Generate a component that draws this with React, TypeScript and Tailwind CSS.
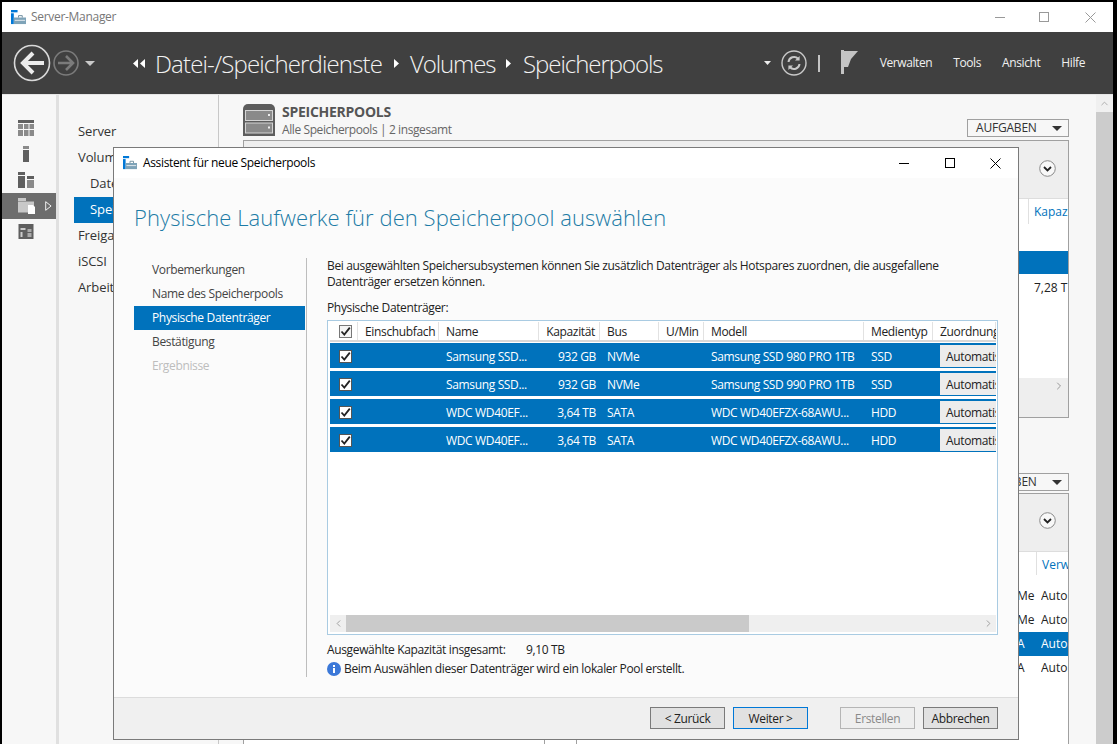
import { ChevronLeft, ChevronRight, ChevronUp } from "lucide-react";

const SANS = "font-['Open_Sans','Liberation_Sans',sans-serif]";

function AppIcon({ className }: { className?: string }) {
  return (
    <svg viewBox="0 0 16 16" className={className}>
      <rect x="0" y="0" width="7" height="2.5" fill="#0078d7" />
      <rect x="0" y="3.5" width="3" height="11.5" fill="#0078d7" />
      <path d="M3 8h13v7H3z" fill="#7ea3b8" />
      <path d="M8 8V6h4v2" fill="none" stroke="#6b8a9c" strokeWidth="1" />
      <rect x="4" y="10.5" width="11" height="1" fill="#e8eef2" />
    </svg>
  );
}

function Triangle({ dir = "right", color = "#fff" }: { dir?: "right" | "left" | "down"; color?: string }) {
  const pts = dir === "right" ? "0,0 5,4.5 0,9" : dir === "left" ? "5,0 0,4.5 5,9" : "0,0 10,0 5,5";
  const w = dir === "down" ? 10 : 5;
  const h = dir === "down" ? 5 : 9;
  return (
    <svg width={w} height={h} viewBox={`0 0 ${w} ${h}`} className="shrink-0">
      <polygon points={pts} fill={color} />
    </svg>
  );
}

function NavButtons() {
  return (
    <div className="flex items-center">
      <svg width="38" height="38" viewBox="0 0 38 38" className="ml-[11px]">
        <circle cx="19" cy="19" r="17.5" fill="none" stroke="#d8d8d8" strokeWidth="1.6" />
        <path d="M20 9L10 19l10 10M10.5 19H31" fill="none" stroke="#ececec" strokeWidth="4" />
      </svg>
      <svg width="26" height="26" viewBox="0 0 26 26" className="ml-[2px]">
        <circle cx="13" cy="13" r="12" fill="none" stroke="#7b7b7b" strokeWidth="1.6" />
        <path d="M13 6l7 7-7 7M20 13H5" fill="none" stroke="#7b7b7b" strokeWidth="2.6" />
      </svg>
      <div className="ml-[6px]">
        <Triangle dir="down" color="#c9c9c9" />
      </div>
    </div>
  );
}

function TopBar() {
  return (
    <div className="flex h-[62px] items-center bg-[#404040] text-white">
      <NavButtons />
      <div className="ml-[38px] flex items-center gap-[2px]">
        <Triangle dir="left" />
        <Triangle dir="left" />
      </div>
      <span className="ml-[10px] mt-[2px] w-[239px] text-[24px] font-light tracking-[-0.85px] text-[#f2f2f2]">Datei-/Speicherdienste</span>
      <Triangle />
      <span className="ml-[11px] mt-[2px] w-[96px] text-[24px] font-light tracking-[-1.1px] text-[#f2f2f2]">Volumes</span>
      <Triangle />
      <span className="ml-[12px] mt-[2px] text-[24px] font-light tracking-[-1.05px] text-[#f2f2f2]">Speicherpools</span>
      <div className="ml-auto flex items-center">
        <svg width="7" height="4" viewBox="0 0 7 4" className="shrink-0">
          <polygon points="0,0 7,0 3.5,4" fill="#eee" />
        </svg>
        <svg width="26" height="26" viewBox="0 0 26 26" className="ml-[10px]">
          <circle cx="13" cy="13" r="12" fill="none" stroke="#c8c8c8" strokeWidth="1.4" />
          <path d="M7.5 12a5.6 5.6 0 0 1 9.6-3.3M18.5 14a5.6 5.6 0 0 1-9.6 3.3" fill="none" stroke="#c8c8c8" strokeWidth="2" />
          <path d="M18.6 6v4.6H14M7.4 20v-4.6H12" fill="#c8c8c8" />
        </svg>
        <div className="ml-[11px] h-[17px] w-[2px] bg-[#c4c4c4]" />
        <svg width="18" height="24" viewBox="0 0 18 24" className="mb-[3px] ml-[21px]">
          <rect x="0" y="0" width="3" height="24" fill="#c4c4c4" />
          <path d="M3 1h14l-7 8-3 8H3z" fill="#c4c4c4" />
        </svg>
        <div className="ml-[21px] flex gap-[21px] pr-[28px] text-[12px] font-medium tracking-[-0.4px] text-[#f0f0f0]">
          <span>Verwalten</span>
          <span>Tools</span>
          <span>Ansicht</span>
          <span>Hilfe</span>
        </div>
      </div>
    </div>
  );
}

function RailIcon({ i }: { i: number }) {
  const a = "#5f5f5f";
  const b = "#8a8a8a";
  if (i === 0)
    return (
      <svg width="16" height="16" viewBox="0 0 16 16">
        <rect width="16" height="3" fill={a} />
        <rect y="4" width="5" height="5" fill={b} />
        <rect x="6" y="4" width="4.5" height="5" fill={b} />
        <rect x="11.5" y="4" width="4.5" height="5" fill={b} />
        <rect y="10" width="5" height="6" fill={b} />
        <rect x="6" y="10" width="4.5" height="6" fill={b} />
        <rect x="11.5" y="10" width="4.5" height="6" fill={b} />
      </svg>
    );
  if (i === 1)
    return (
      <svg width="16" height="16" viewBox="0 0 16 16">
        <rect x="5" width="6" height="3" fill={b} />
        <rect x="5" y="4" width="6" height="12" fill={a} />
      </svg>
    );
  if (i === 2)
    return (
      <svg width="16" height="16" viewBox="0 0 16 16">
        <rect width="7" height="3" fill={a} />
        <rect y="4" width="7" height="12" fill={a} />
        <rect x="9" y="4" width="7" height="3" fill={a} />
        <rect x="9" y="8" width="7" height="8" fill={b} />
      </svg>
    );
  if (i === 3)
    return (
      <svg width="18" height="16" viewBox="0 0 18 16">
        <rect width="8" height="3" fill="#c8c8c8" />
        <rect y="3.5" width="16" height="11" fill="#c8c8c8" />
        <path d="M10 7h5l2 2v7h-7z" fill="#fff" />
      </svg>
    );
  return (
    <svg width="16" height="16" viewBox="0 0 16 16">
      <rect x="0.5" width="15" height="15" fill={a} />
      <rect x="2.5" y="4" width="5" height="2" fill="#ccc" />
      <rect x="2.5" y="8" width="2" height="5" fill="#ccc" />
      <rect x="9.5" y="5" width="4" height="3" fill="#aaa" />
      <rect x="9.5" y="9" width="4" height="4" fill="#aaa" />
    </svg>
  );
}

function Rail() {
  return (
    <div className="w-[54px] shrink-0 border-r-[3px] border-[#e0e0e0] box-content pt-[20px]">
      {[0, 1, 2, 3, 4].map((i) => (
        <div key={i} className={`flex h-[26px] items-center pl-[16px] ${i === 3 ? "bg-[#6d6d6d]" : ""}`}>
          <RailIcon i={i} />
          {i === 3 && (
            <svg width="7" height="10" viewBox="0 0 7 10" className="ml-[9px]">
              <path d="M.7.7l5.4 4.3-5.4 4.3z" fill="none" stroke="#f0f0f0" />
            </svg>
          )}
        </div>
      ))}
    </div>
  );
}

function SideNav() {
  const items = [
    { t: "Server" },
    { t: "Volumes" },
    { t: "Datenträger", sub: true },
    { t: "Speicherpools", sub: true, active: true },
    { t: "Freigaben" },
    { t: "iSCSI" },
    { t: "Arbeitsordner" },
  ];
  return (
    <div className="w-[160px] shrink-0 border-r border-[#c8c8c8] pt-[24px] pl-[15px] text-[13px] tracking-[-0.1px] text-[#333]">
      {items.map((it) => (
        <div
          key={it.t}
          className={`flex h-[26px] items-center ${it.sub ? "pl-[16px]" : "pl-[4px]"} ${it.active ? "bg-[#0072bc] text-white" : ""}`}
        >
          {it.t}
        </div>
      ))}
    </div>
  );
}

function TasksButton({ label = "AUFGABEN" }: { label?: string }) {
  return (
    <div className="flex h-[18px] w-[102px] items-center justify-between border border-[#a0a0a0] pl-[8px] pr-[6px] text-[12px] tracking-[-0.2px] text-[#333]">
      <span>{label}</span>
      <Triangle dir="down" color="#333" />
    </div>
  );
}

function CircleChevron() {
  return (
    <svg width="17" height="17" viewBox="0 0 17 17">
      <circle cx="8.5" cy="8.5" r="7.8" fill="#f8f8f8" stroke="#8a8a8a" />
      <path d="M5 7l3.5 3.5L12 7" fill="none" stroke="#222" strokeWidth="1.8" />
    </svg>
  );
}

function PoolsIcon() {
  return (
    <svg width="32" height="32" viewBox="0 0 32 32">
      <path d="M0 5a5 5 0 0 1 5-5h22a5 5 0 0 1 5 5v27H0z" fill="#5d5d5d" />
      <rect x="2.5" y="6.5" width="27" height="10" fill="#8a8a8a" stroke="#d4d4d4" />
      <rect x="2.5" y="19" width="27" height="10" fill="#8a8a8a" stroke="#d4d4d4" />
      <rect x="25" y="10" width="2" height="2" fill="#eee" />
      <rect x="25" y="22.5" width="2" height="2" fill="#eee" />
    </svg>
  );
}

function BackgroundContent() {
  return (
    <div className="flex-1 bg-[#f7f7f7] pl-[24px] pr-[27px] text-[12px] text-[#222]">
      <div className="flex h-[45px] items-start pt-[9px]">
        <PoolsIcon />
        <div className="ml-[7px] -mt-[1px]">
          <div className="text-[14px] font-bold leading-[18px] tracking-[-0.27px] text-[#555]">SPEICHERPOOLS</div>
          <div className="text-[12px] leading-[18px] tracking-[-0.4px] text-[#666]">Alle Speicherpools | 2 insgesamt</div>
        </div>
        <div className="ml-auto mt-[15px]">
          <TasksButton />
        </div>
      </div>
      <div className="h-[278px] border border-[#a0a0a0] bg-white">
        <div className="flex h-[57px] items-center justify-end bg-[#eeeeee] pb-[2px] pr-[12px]">
          <CircleChevron />
        </div>
        <div className="flex h-[26px] justify-end border-t border-[#ddd]">
          <div className="w-[40px] border-l border-[#e0e0e0] pl-[5px] pt-[4px] whitespace-nowrap overflow-hidden text-[#0072bc]">Kapazität</div>
        </div>
        <div className="mt-[27px] h-[23px] bg-[#0072bc]" />
        <div className="mt-[2px] flex h-[22px] justify-end">
          <div className="w-[34px] overflow-hidden whitespace-nowrap pt-[3px]">7,28 TB</div>
        </div>
        <div className="mt-[80px] flex h-[39px] justify-end bg-[#eeeeee] pr-[3px] pt-[2px]">
          <ChevronRight size={12} color="#999" />
        </div>
      </div>
      <div className="mt-[55px] flex justify-end">
        <TasksButton label="AUFGABEN" />
      </div>
      <div className="mt-[2px] h-[252px] border border-b-0 border-[#a0a0a0] bg-white">
        <div className="flex h-[57px] items-center justify-end bg-[#eeeeee] pb-[4px] pr-[12px]">
          <CircleChevron />
        </div>
        <div className="flex h-[24px] justify-end border-t border-[#ddd]">
          <div className="w-[32px] border-l border-[#e0e0e0] pl-[5px] pt-[4px] whitespace-nowrap overflow-hidden text-[#0072bc]">Verwaltung</div>
        </div>
        <div className="mt-[9px]">
          {["Me", "Me", "A", "A"].map((v, i) => (
            <div key={i} className={`flex h-[24px] items-center justify-end whitespace-nowrap ${i === 2 ? "bg-[#0072bc] text-white" : ""}`}>
              <span className="w-[24px]">{v}</span>
              <span className="w-[27px] overflow-hidden">Automatisch</span>
            </div>
          ))}
        </div>
        <div className="mt-[58px] flex h-[12px] pl-[300px]">
          <div className="h-full w-[33px] border-x border-[#a0a0a0]" />
        </div>
      </div>
    </div>
  );
}

function Check({ dark = false }: { dark?: boolean }) {
  return (
    <div className={`flex h-[13px] w-[13px] items-center justify-center border ${dark ? "border-[#555] bg-white" : "border-[#777] bg-[#f4f4f4]"}`}>
      <svg width="11" height="11" viewBox="0 0 11 11">
        <path d="M1.5 5.5l2.8 3L9.8 1.6" fill="none" stroke="#222" strokeWidth="1.8" />
      </svg>
    </div>
  );
}

const COLS = [
  { w: "w-[28px]", label: "" },
  { w: "w-[81px]", label: "Einschubfach" },
  { w: "w-[100px]", label: "Name" },
  { w: "w-[61px]", label: "Kapazität", right: true },
  { w: "w-[59px]", label: "Bus" },
  { w: "w-[45px]", label: "U/Min" },
  { w: "w-[160px]", label: "Modell" },
  { w: "w-[69px]", label: "Medientyp" },
  { w: "w-[63px]", label: "Zuordnung" },
];

const DISKS = [
  { name: "Samsung SSD...", cap: "932 GB", bus: "NVMe", model: "Samsung SSD 980 PRO 1TB", type: "SSD" },
  { name: "Samsung SSD...", cap: "932 GB", bus: "NVMe", model: "Samsung SSD 990 PRO 1TB", type: "SSD" },
  { name: "WDC WD40EF...", cap: "3,64 TB", bus: "SATA", model: "WDC WD40EFZX-68AWU...", type: "HDD" },
  { name: "WDC WD40EF...", cap: "3,64 TB", bus: "SATA", model: "WDC WD40EFZX-68AWU...", type: "HDD" },
];

function DiskTable() {
  return (
    <div className="mt-[4px] flex h-[315px] w-[671px] flex-col border border-[#a9cbe2] bg-white pl-[2px] pr-[1px] pt-[1px]">
      <div className="flex h-[20px] overflow-hidden border-b-2 border-[#d8d8d8]">
        {COLS.map((c, i) => (
          <div
            key={i}
            className={`flex shrink-0 items-center whitespace-nowrap border-r border-[#e2e2e2] pt-[2px] ${c.w} ${c.right ? "justify-end pr-[4px]" : "pl-[7px]"}`}
          >
            {i === 0 ? (
              <div className="ml-[2px] mb-[2px]">
                <Check />
              </div>
            ) : (
              c.label
            )}
          </div>
        ))}
      </div>
      <div className="flex flex-1 flex-col gap-[3px] pt-[1px]">
        {DISKS.map((d, i) => (
          <div key={i} className="flex h-[25px] items-center overflow-hidden bg-[#0072bc] pt-[2px] text-white">
            <div className="w-[28px] shrink-0 pl-[9px]">
              <Check dark />
            </div>
            <div className="w-[81px] shrink-0" />
            <div className="w-[100px] shrink-0 pl-[7px]">{d.name}</div>
            <div className="w-[61px] shrink-0 pr-[4px] text-right">{d.cap}</div>
            <div className="w-[59px] shrink-0 pl-[7px]">{d.bus}</div>
            <div className="w-[45px] shrink-0" />
            <div className="w-[160px] shrink-0 pl-[7px]">{d.model}</div>
            <div className="w-[69px] shrink-0 pl-[7px]">{d.type}</div>
            <div className="mb-[2px] ml-[7px] flex h-[22px] flex-1 items-center overflow-hidden whitespace-nowrap bg-[#ececec] pl-[6px] pt-[2px] text-[#222]">
              Automatisch
            </div>
          </div>
        ))}
      </div>
      <div className="mb-[2px] flex h-[17px] items-center bg-[#efefef]">
        <div className="flex w-[16px] justify-center">
          <ChevronLeft size={11} color="#999" />
        </div>
        <div className="h-full w-[403px] bg-[#cacaca]" />
        <div className="ml-auto flex w-[16px] justify-center">
          <ChevronRight size={11} color="#999" />
        </div>
      </div>
    </div>
  );
}

function WizButton({ label, focus, off }: { label: string; focus?: boolean; off?: boolean }) {
  const tone = focus ? "border-[#0078d7] bg-[#e1e1e1] text-[#222]" : off ? "border-[#b5b5b5] bg-[#eeeeee] text-[#8a8a8a]" : "border-[#7a7a7a] bg-[#e1e1e1] text-[#222]";
  return <div className={`flex h-[22px] w-[75px] items-center justify-center border pt-[2px] ${tone}`}>{label}</div>;
}

function Wizard() {
  const steps = ["Vorbemerkungen", "Name des Speicherpools", "Physische Datenträger", "Bestätigung", "Ergebnisse"];
  return (
    <div className="absolute left-[113px] top-[147px] flex h-[593px] w-[906px] flex-col border border-[#7a7a7a] bg-[#fbfbfb] text-[12px] tracking-[-0.35px] text-[#222]">
      <div className="flex h-[30px] items-center bg-white pl-[9px]">
        <AppIcon className="h-[14px] w-[14px]" />
        <span className="ml-[6px] text-black">Assistent für neue Speicherpools</span>
        <div className="ml-auto flex items-center">
          <div className="h-px w-[10px] bg-black" />
          <div className="ml-[36px] h-[10px] w-[10px] border border-black" />
          <svg width="11" height="11" viewBox="0 0 11 11" className="ml-[35px] mr-[17px]">
            <path d="M.5.5l10 10M10.5.5l-10 10" stroke="#000" fill="none" />
          </svg>
        </div>
      </div>
      <h1 className="ml-[20px] mt-[24px] h-[32px] text-[22px] font-light leading-[30px] tracking-[0.06px] text-[#1d7ba6]">
        Physische Laufwerke für den Speicherpool auswählen
      </h1>
      <div className="mt-[24px] flex flex-1">
        <div className="w-[171px] ml-[20px] shrink-0">
          {steps.map((s, i) => (
            <div
              key={s}
              className={`flex h-[24px] items-center pl-[18px] ${i === 2 ? "bg-[#0072bc] text-white" : i === 4 ? "text-[#bdbdbd]" : "text-[#444]"}`}
            >
              {s}
            </div>
          ))}
        </div>
        <div className="ml-px mb-[20px] w-px bg-[#bdbdbd]" />
        <div className="ml-[20px] flex-1">
          <p className="w-[650px] leading-[16px]">
            Bei ausgewählten Speichersubsystemen können Sie zusätzlich Datenträger als Hotspares zuordnen, die ausgefallene Datenträger ersetzen können.
          </p>
          <div className="mt-[10px] leading-[16px]">Physische Datenträger:</div>
          <DiskTable />
          <div className="mt-[7px] flex leading-[16px]">
            <span className="w-[199px]">Ausgewählte Kapazität insgesamt:</span>
            <span>9,10 TB</span>
          </div>
          <div className="mt-[3px] flex items-center leading-[16px]">
            <svg width="14" height="14" viewBox="0 0 14 14" className="mr-[3px]">
              <circle cx="7" cy="7" r="7" fill="#3b78d8" />
              <rect x="6" y="6" width="2" height="5" fill="#fff" />
              <rect x="6" y="3" width="2" height="2" fill="#fff" />
            </svg>
            Beim Auswählen dieser Datenträger wird ein lokaler Pool erstellt.
          </div>
        </div>
      </div>
      <div className="flex h-[42px] items-start border-t border-[#dcdcdc] bg-[#f0f0f0] pr-[20px] pt-[9px]">
        <div className="ml-auto flex">
          <WizButton label="< Zurück" />
          <div className="ml-[8px]">
            <WizButton label="Weiter >" focus />
          </div>
          <div className="ml-[32px]">
            <WizButton label="Erstellen" off />
          </div>
          <div className="ml-[8px]">
            <WizButton label="Abbrechen" />
          </div>
        </div>
      </div>
    </div>
  );
}

export default function App() {
  return (
    <div className={`relative h-[744px] w-[1117px] overflow-hidden bg-black pl-[2px] pr-[4px] pt-[2px] ${SANS}`}>
      <div className="flex h-full flex-col bg-white">
        <div className="flex h-[30px] shrink-0 items-center pl-[9px] text-[12px] tracking-[-0.3px] text-[#777]">
          <AppIcon className="h-[15px] w-[15px]" />
          <span className="ml-[5px]">Server-Manager</span>
          <div className="ml-auto flex items-center">
            <div className="h-px w-[10px] bg-[#999]" />
            <div className="ml-[34px] h-[10px] w-[10px] border border-[#999]" />
            <svg width="11" height="11" viewBox="0 0 11 11" className="ml-[36px] mr-[17px]">
              <path d="M.5.5l10 10M10.5.5l-10 10" stroke="#999" fill="none" />
            </svg>
          </div>
        </div>
        <TopBar />
        <div className="flex flex-1 overflow-hidden border-t border-[#e6e6e6] bg-[#f7f7f7]">
          <Rail />
          <SideNav />
          <BackgroundContent />
          <div className="flex w-[17px] shrink-0 flex-col bg-[#cccccc]">
            <div className="flex h-[17px] justify-center bg-[#f0f0f0] pt-[3px]">
              <ChevronUp size={11} color="#aaa" />
            </div>
          </div>
        </div>
      </div>
      <Wizard />
    </div>
  );
}
